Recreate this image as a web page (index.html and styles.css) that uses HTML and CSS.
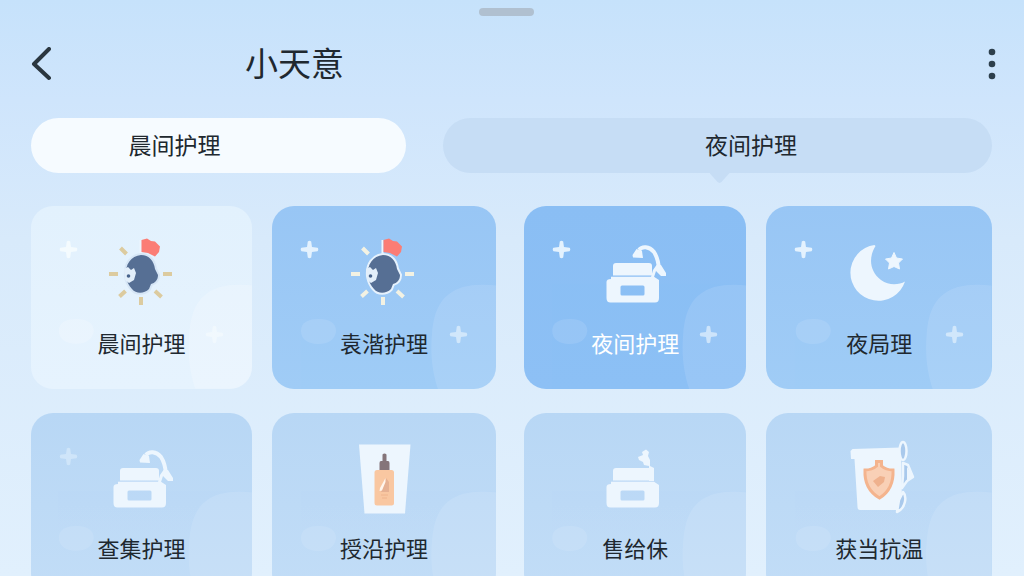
FILE: index.html
```html
<!DOCTYPE html>
<html lang="zh-CN">
<head>
  <meta charset="utf-8">
  <meta name="viewport" content="width=device-width, initial-scale=1">
  <title>小天意</title>
  <link rel="stylesheet" href="styles.css">
</head>
<body>
  <!-- shared shapes -->
  <svg class="defs" aria-hidden="true">
    <symbol id="spark" viewBox="0 0 20 20">
      <path d="M8.200 1.500Q10 0 11.800 1.500L12.600 7.400L18.500 8.200Q20 10 18.500 11.800L12.600 12.600L11.800 18.500Q10 20 8.200 18.500L7.400 12.600L1.500 11.800Q0 10 1.500 8.200L7.400 7.400Z"/>
    </symbol>
    <symbol id="clouds" viewBox="0 0 222 183">
      <path d="M165 183C160 168 157 150 159 128C161 104 168 88 190 81Q206 77 226 80V183Z"/>
      <path d="M28 125C28 116 36 113 46 113C56 113 63 117 63 125C62 134 55 138 45 138C35 138 28 133 28 125Z"/>
    </symbol>
    <symbol id="sun" viewBox="0 0 72 88">
      <path class="rays" d="M3 43H12M57 43H66M35 66V74M13.500 65.500L19.500 60M49 60L55.500 66M14.500 17L20.500 23"/>
      <path class="pole" d="M34.500 9V23"/>
      <path class="flag" d="M35.500 9L41 7.500L45 10L49 10.500L54 15.500L53 21L49 25.500L42 22L35.500 21Z"/>
      <path class="head" d="M35 24C43 24 48 30 49 38L52 44C52 49 49 52 45 53L43 58C38 63 30 63 26 58C23 55 21 51 20 45C19 33 25 25 35 24Z"/>
      <path class="face" d="M18 38L22 36L25 39L28 37L30 42L28 49L23 52L19 49Z"/>
      <circle class="eye" cx="22.500" cy="45" r="1.800"/>
    </symbol>
    <symbol id="jar" viewBox="0 0 72 88">
      <path d="M17 32H50Q53 32 53 35V44.500H14V35Q14 32 17 32Z"/>
      <path fill-rule="evenodd" d="M12 45.800H55L60 49V67Q60 71.500 56 71.500H11.500Q7.500 71.500 7.500 67V51Q7.500 48 12 48ZM23 54.500Q21.500 54.500 21.500 56V63Q21.500 64.500 23 64.500H44Q45.500 64.500 45.500 63V56Q45.500 54.500 44 54.500Z"/>
    </symbol>
    <symbol id="lamp" viewBox="0 0 72 88">
      <path class="arm" d="M40 19C43 15 50 15 55 21Q59 27 60 38"/>
      <path d="M37.500 18L43 20L44 27L34 26.500L33.500 24ZM57.500 34L62 34L67 42V45H62L57 40L55 46H52L54 39Z"/>
    </symbol>
  </svg>

  <main class="page">
    <div class="grabber"><span></span></div>

    <header class="topbar">
      <button class="icon-btn back" type="button" aria-label="返回">
        <svg width="20" height="34" viewBox="0 0 20 34"><path d="M18 2L3 17L18 31"/></svg>
      </button>
      <h1>小天意</h1>
      <button class="icon-btn more" type="button" aria-label="更多">
        <svg width="8" height="34" viewBox="0 0 8 34"><circle cx="4" cy="5" r="3.300"/><circle cx="4" cy="17" r="3.300"/><circle cx="4" cy="29" r="3.300"/></svg>
      </button>
    </header>

    <nav class="tabs">
      <button class="tab tab-morning" type="button">晨间护理</button>
      <button class="tab tab-night" type="button">夜间护理</button>
    </nav>

    <div class="groups">
      <section class="group">
        <button class="card card-light" type="button">
          <svg class="clouds"><use href="#clouds"/></svg>
          <svg class="spark spark-top"><use href="#spark"/></svg>
          <svg class="spark spark-low"><use href="#spark"/></svg>
          <svg class="icon"><use href="#sun"/></svg>
          <span class="label">晨间护理</span>
        </button>
        <button class="card card-blue card-outlined" type="button">
          <svg class="clouds"><use href="#clouds"/></svg>
          <svg class="spark spark-top"><use href="#spark"/></svg>
          <svg class="spark spark-low"><use href="#spark"/></svg>
          <svg class="icon"><use href="#sun"/></svg>
          <span class="label">袁湝护理</span>
        </button>
        <button class="card card-soft" type="button">
          <svg class="clouds"><use href="#clouds"/></svg>
          <svg class="spark spark-top"><use href="#spark"/></svg>
          <svg class="icon"><use href="#jar"/><use href="#lamp"/></svg>
          <span class="label">查集护理</span>
        </button>
        <button class="card card-soft" type="button">
          <svg class="clouds"><use href="#clouds"/></svg>
          <svg class="icon" viewBox="0 0 72 88">
            <path d="M11 8.500H62.500L57 77.500H16.500Z"/>
            <path fill="#85757a" d="M34.500 18.500Q36.500 16.500 38.500 18.500V25H40Q41.500 25 41.500 27V34H31.500V27Q31.500 25 33 25H34.500Z"/>
            <rect x="26.500" y="34" width="19.500" height="35.500" rx="2.500" fill="#f9c7a1"/>
            <path fill="#e6b193" d="M38 42L41 46V56H33Z"/>
            <path fill="#fff5ec" d="M37.500 42L32 52L31.500 55L34 54.500L37.500 46Z"/>
            <path d="M33 59H40M34 62H39" stroke="#efb48d" fill="none"/>
          </svg>
          <span class="label">授沿护理</span>
        </button>
      </section>

      <section class="group">
        <button class="card card-active" type="button">
          <svg class="clouds"><use href="#clouds"/></svg>
          <svg class="spark spark-top"><use href="#spark"/></svg>
          <svg class="spark spark-low"><use href="#spark"/></svg>
          <svg class="icon"><use href="#jar"/><use href="#lamp"/></svg>
          <span class="label">夜间护理</span>
        </button>
        <button class="card card-blue" type="button">
          <svg class="clouds"><use href="#clouds"/></svg>
          <svg class="spark spark-top"><use href="#spark"/></svg>
          <svg class="spark spark-low"><use href="#spark"/></svg>
          <svg class="icon" viewBox="0 0 72 88">
            <path d="M31.500 14A28 28 0 1 0 62 50.500C56 54 46 55 38 49C27 41 25 27 32.500 15Z"/>
            <path stroke="currentColor" stroke-linejoin="round" d="M51 21.500L53.500 27L59.500 28L55.500 32L56.500 38L51 35.500L45.500 38L46.500 32L42.500 28L48.500 27Z"/>
          </svg>
          <span class="label">夜局理</span>
        </button>
        <button class="card card-soft" type="button">
          <svg class="clouds"><use href="#clouds"/></svg>
          <svg class="icon" viewBox="0 0 72 88">
            <use href="#jar"/>
            <path d="M43 16L47 13.500L50 16L49 20L51 24L51 30L55 32V45H50V30L45 29L44 26L40 24L39 21L44 19Z"/>
          </svg>
          <span class="label">售给佅</span>
        </button>
        <button class="card card-soft" type="button">
          <svg class="clouds"><use href="#clouds"/></svg>
          <svg class="icon" viewBox="0 0 72 88">
            <path d="M7.500 15L9.500 13L58 11.500L59 70L55 74H17Q14.500 74 14.500 71L11.500 23H8Z"/>
            <g fill="#a9c9ec" stroke="#edf6fe" stroke-width="2.500" stroke-linejoin="round">
              <ellipse cx="60" cy="15" rx="3.500" ry="9"/>
              <path d="M60 27L65 29L70 41L64 45L59 52L60 40Z"/>
              <path d="M60 56C64 60 63 72 54 76L56 64Z"/>
            </g>
            <path fill="#edf6fe" d="M64 31L71 41L64 45Z"/>
            <path fill="#f9d0b6" stroke="#f4b48e" stroke-width="3" d="M33.500 25.500H38.500V30Q43 34 50 34Q51 53 36.500 62Q21 53 22 34Q29 34 33.500 30Z"/>
            <path fill="#efb18d" d="M30 45L37 40L42 41L41 46L35 51Z"/>
          </svg>
          <span class="label">获当抗温</span>
        </button>
      </section>
    </div>
  </main>
</body>
</html>
```
FILE: styles.css
```css
* {
  box-sizing: border-box;
}

html {
  scrollbar-width: none;
  background: #e1f0fd;
}

body {
  margin: 0;
  min-height: 100vh;
  background: linear-gradient(#c6e2fb 0, #cfe5fc 100px, #d8eafb 240px, #e1f0fd 576px);
  color: #20282f;
  font-family: "Noto Sans CJK SC", sans-serif;
}

button {
  margin: 0;
  padding: 0;
  border: 0;
  background: none;
  color: inherit;
  font-family: inherit;
  cursor: pointer;
}

.defs {
  position: absolute;
  width: 0;
  height: 0;
}

.page {
  padding: 8px 32px 24px 31px;
}

.grabber {
  display: flex;
  justify-content: center;
  padding-right: 10px;
}

.grabber span {
  width: 55px;
  height: 8px;
  border-radius: 4px;
  background: #b0c0d0;
}

/* top bar */
.topbar {
  display: flex;
  align-items: center;
  height: 48px;
  margin-top: 24px;
}

.topbar h1 {
  flex: 1;
  margin: 0 0 0 190px;
  padding-bottom: 4px;
  font-size: 33px;
  font-weight: 400;
  line-height: 44px;
}

.icon-btn {
  display: flex;
  align-items: center;
  height: 48px;
}

.back {
  width: 24px;
}

.back path {
  fill: none;
  stroke: #2a363f;
  stroke-width: 4;
  stroke-linecap: round;
  stroke-linejoin: round;
}

.more {
  justify-content: flex-end;
  width: 24px;
  margin-right: -4px;
  fill: #2d3f4c;
}

/* tabs */
.tabs {
  display: grid;
  grid-template-columns: 375fr 549fr;
  gap: 37px;
  margin-top: 30px;
}

.tab {
  height: 55px;
  padding-bottom: 4px;
  border-radius: 28px;
  font-size: 23px;
  line-height: 32px;
}

.tab-morning {
  padding-right: 88px;
  background: #f6fbff;
}

.tab-night {
  position: relative;
  padding-left: 67px;
  background: #c6ddf5;
}

.tab-night::after {
  content: "";
  position: absolute;
  top: 100%;
  left: 50%;
  width: 20px;
  height: 10px;
  margin-left: -8px;
  background: #c6ddf5;
  clip-path: polygon(0 0, 100% 0, 60% 90%, 50% 100%, 40% 90%);
}

/* cards */
.groups {
  display: grid;
  grid-template-columns: 465fr 468fr;
  gap: 28px;
  margin-top: 33px;
}

.group {
  display: grid;
  grid-template-columns: 221fr 224fr;
  gap: 24px 20px;
}

.card {
  position: relative;
  display: flex;
  flex-direction: column;
  align-items: center;
  min-height: 183px;
  padding: 25px 0 33px;
  border-radius: 22px;
  overflow: hidden;
}

.card-light {
  background: linear-gradient(#e2f1fd, #e6f3fe);
}

.card-blue {
  background: linear-gradient(#98c6f5, #a0ccf6);
}

.card-active {
  background: linear-gradient(#8abef4, #8dc0f5);
  color: #fff;
}

.card-soft {
  padding-top: 23px;
  background: linear-gradient(#b8d7f5, #c2ddf7);
}

.clouds {
  position: absolute;
  right: 0;
  top: 0;
  width: 100%;
  height: 183px;
  fill: #fff;
  opacity: 0.1;
}

.card-light .clouds {
  opacity: 0.2;
}

.spark {
  position: absolute;
  width: 19px;
  height: 19px;
  fill: #e4f2fe;
}

.spark-top {
  left: 28px;
  top: 34px;
}

.spark-low {
  right: 28px;
  top: 119px;
  opacity: 0.7;
}

.card-light .spark {
  fill: #f4fbfe;
}

.card-soft .spark {
  opacity: 0.5;
}

.icon {
  position: relative;
  width: 72px;
  height: 88px;
  margin-bottom: 9px;
  color: #edf6fe;
  fill: #edf6fe;
}

.label {
  position: relative;
  font-size: 22px;
  line-height: 28px;
}

.arm {
  fill: none;
  stroke: currentColor;
  stroke-width: 4;
}

/* sun, ray and outline colours are set by the card */
.card-light {
  --ray: #dccb9f;
  --outline: #d6e6f6;
}

.card-outlined {
  --ray: #f3f2e3;
  --outline: #e6f2fd;
}

.rays {
  stroke: var(--ray);
  stroke-width: 4;
}

.pole {
  stroke: #eef6fd;
  stroke-width: 2;
}

.flag {
  fill: #fb7d75;
}

.head {
  fill: #566f94;
  stroke: var(--outline);
  stroke-width: 4;
  paint-order: stroke;
}

.face {
  fill: #e3effa;
}

.eye {
  fill: #48648c;
}
```
